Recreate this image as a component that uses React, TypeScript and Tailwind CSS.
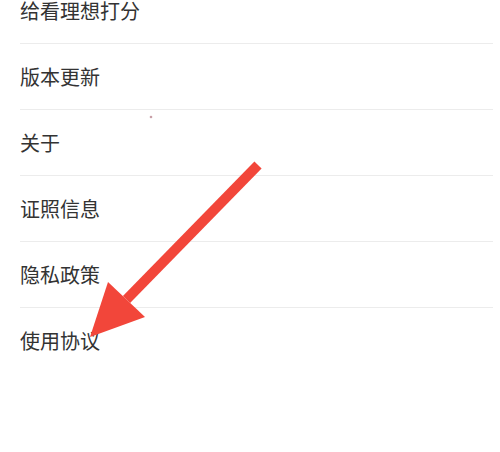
const items = ["给看理想打分", "版本更新", "关于", "证照信息", "隐私政策", "使用协议"];

export default function App() {
  return (
    <div
      className="relative w-[500px] h-[452px] overflow-hidden bg-white"
      style={{ fontFamily: '"Noto Sans CJK SC", "Noto Sans", sans-serif' }}
    >
      <ul className="-mt-[22px] pl-5 pr-[7px]">
        {items.map((label, i) => (
          <li
            key={label}
            className={`flex h-[66px] items-center text-[20px] text-[#333333] ${
              i < items.length - 1 ? "border-b border-[#ececec]" : ""
            }`}
          >
            {label}
          </li>
        ))}
      </ul>

      {/* stray mark */}
      <svg className="absolute left-[148px] top-[114px]" width="6" height="6" viewBox="0 0 6 6">
        <circle cx="3" cy="3" r="1.3" fill="#c9a0a8" />
      </svg>

      {/* annotation arrow */}
      <svg className="absolute left-0 top-0" width="500" height="452" viewBox="0 0 500 452">
        <polygon points="261.6,168.5 254.4,161.5 122.9,296 130.1,303" fill="#f2463a" />
        <polygon points="90,337 108,282 145,317" fill="#f2463a" />
      </svg>
    </div>
  );
}
